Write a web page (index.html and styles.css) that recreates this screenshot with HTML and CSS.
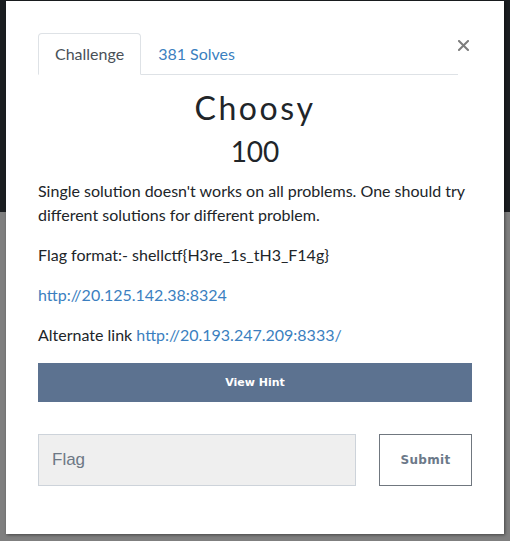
FILE: index.html
```html
<!DOCTYPE html>
<html lang="en">
<head>
<meta charset="utf-8">
<title>Choosy</title>
<link rel="stylesheet" href="styles.css">
</head>
<body>
<div class="modal">
  <div class="head">
    <ul class="tabs">
      <li class="tab active">Challenge</li>
      <li class="tab"><a href="#solves" class="tab-link">381 Solves</a></li>
    </ul>
    <button class="close" type="button" aria-label="Close">
      <svg width="11" height="11" viewBox="0 0 11 11"><path d="M1 1 L10 10 M10 1 L1 10" stroke="#7d7d7d" stroke-width="2" stroke-linecap="square"/></svg>
    </button>
  </div>
  <h2 class="title">Choosy</h2>
  <h3 class="value">100</h3>
  <div class="desc">
    <p>Single solution doesn't works on all problems. One should try different solutions for different problem.</p>
    <p>Flag format:- shellctf{H3re_1s_tH3_F14g}</p>
    <p><a href="#">http://20.125.142.38:8324</a></p>
    <p>Alternate link <a href="#">http://20.193.247.209:8333/</a></p>
  </div>
  <button class="hint" type="button">View Hint</button>
  <form class="flag-row">
    <input class="flag-input" type="text" placeholder="Flag">
    <button class="submit" type="button">Submit</button>
  </form>
</div>
</body>
</html>
```
FILE: styles.css
```css
html, body {
  margin: 0;
  padding: 0;
}
body {
  width: 510px;
  height: 541px;
  overflow: hidden;
  background: linear-gradient(to bottom, #1b1e21 0, #1b1e21 212px, #7f7f7f 212px);
  font-family: Lato, "Liberation Sans", sans-serif;
  color: #212529;
}
.modal {
  box-sizing: border-box;
  width: 498px;
  height: 533px;
  margin: 1px 0 0 6px;
  padding: 32px;
  background: #fff;
  box-shadow: 1px 1px 3px rgba(0, 0, 0, 0.45);
}
.head {
  display: flex;
  align-items: flex-start;
}
.tabs {
  flex: 1;
  display: flex;
  margin: 0;
  padding: 0;
  list-style: none;
  border-bottom: 1px solid #dee2e6;
}
.tab {
  margin-bottom: -1px;
  padding: 8px 16px;
  line-height: 24px;
  font-size: 16px;
  border: 1px solid transparent;
  border-radius: 4px 4px 0 0;
}
.tab.active {
  color: #495057;
  border-color: #dee2e6 #dee2e6 #fff;
  background: #fff;
}
.tab-link {
  color: #3b7fc0;
  text-decoration: none;
}
.close {
  width: 14px;
  margin-top: 7px;
  padding: 0;
  border: 0;
  background: none;
  line-height: 0;
  text-align: left;
}
.title {
  margin: 14px 0 8px;
  font-size: 32px;
  line-height: 1.2;
  font-weight: 400;
  letter-spacing: 2.6px;
  text-align: center;
}
.value {
  margin: 0 0 10px;
  font-size: 28px;
  line-height: 1.2;
  font-weight: 400;
  text-align: center;
}
.desc p {
  margin: 0 0 16px;
  font-size: 16px;
  line-height: 24px;
}
.desc a {
  color: #3b7fc0;
  text-decoration: none;
}
.hint {
  display: block;
  width: 100%;
  height: 39px;
  border: 0;
  background: #5c7290;
  color: #fff;
  font-family: "DejaVu Sans", sans-serif;
  font-weight: 700;
  font-size: 11px;
}
.flag-row {
  display: flex;
  justify-content: space-between;
  margin-top: 32px;
}
.flag-input {
  box-sizing: border-box;
  width: 318px;
  height: 52px;
  padding: 0 13px;
  border: 1px solid #cdd3da;
  background: #efefef;
  font-family: "Liberation Sans", Arial, sans-serif;
  font-size: 17px;
  color: #495057;
}
.flag-input::placeholder {
  color: #6d7885;
}
.submit {
  box-sizing: border-box;
  width: 93px;
  height: 52px;
  border: 1px solid #70777f;
  background: #fff;
  color: #6c7989;
  font-family: "DejaVu Sans", sans-serif;
  font-weight: 700;
  font-size: 12px;
  letter-spacing: 0.3px;
}
```
